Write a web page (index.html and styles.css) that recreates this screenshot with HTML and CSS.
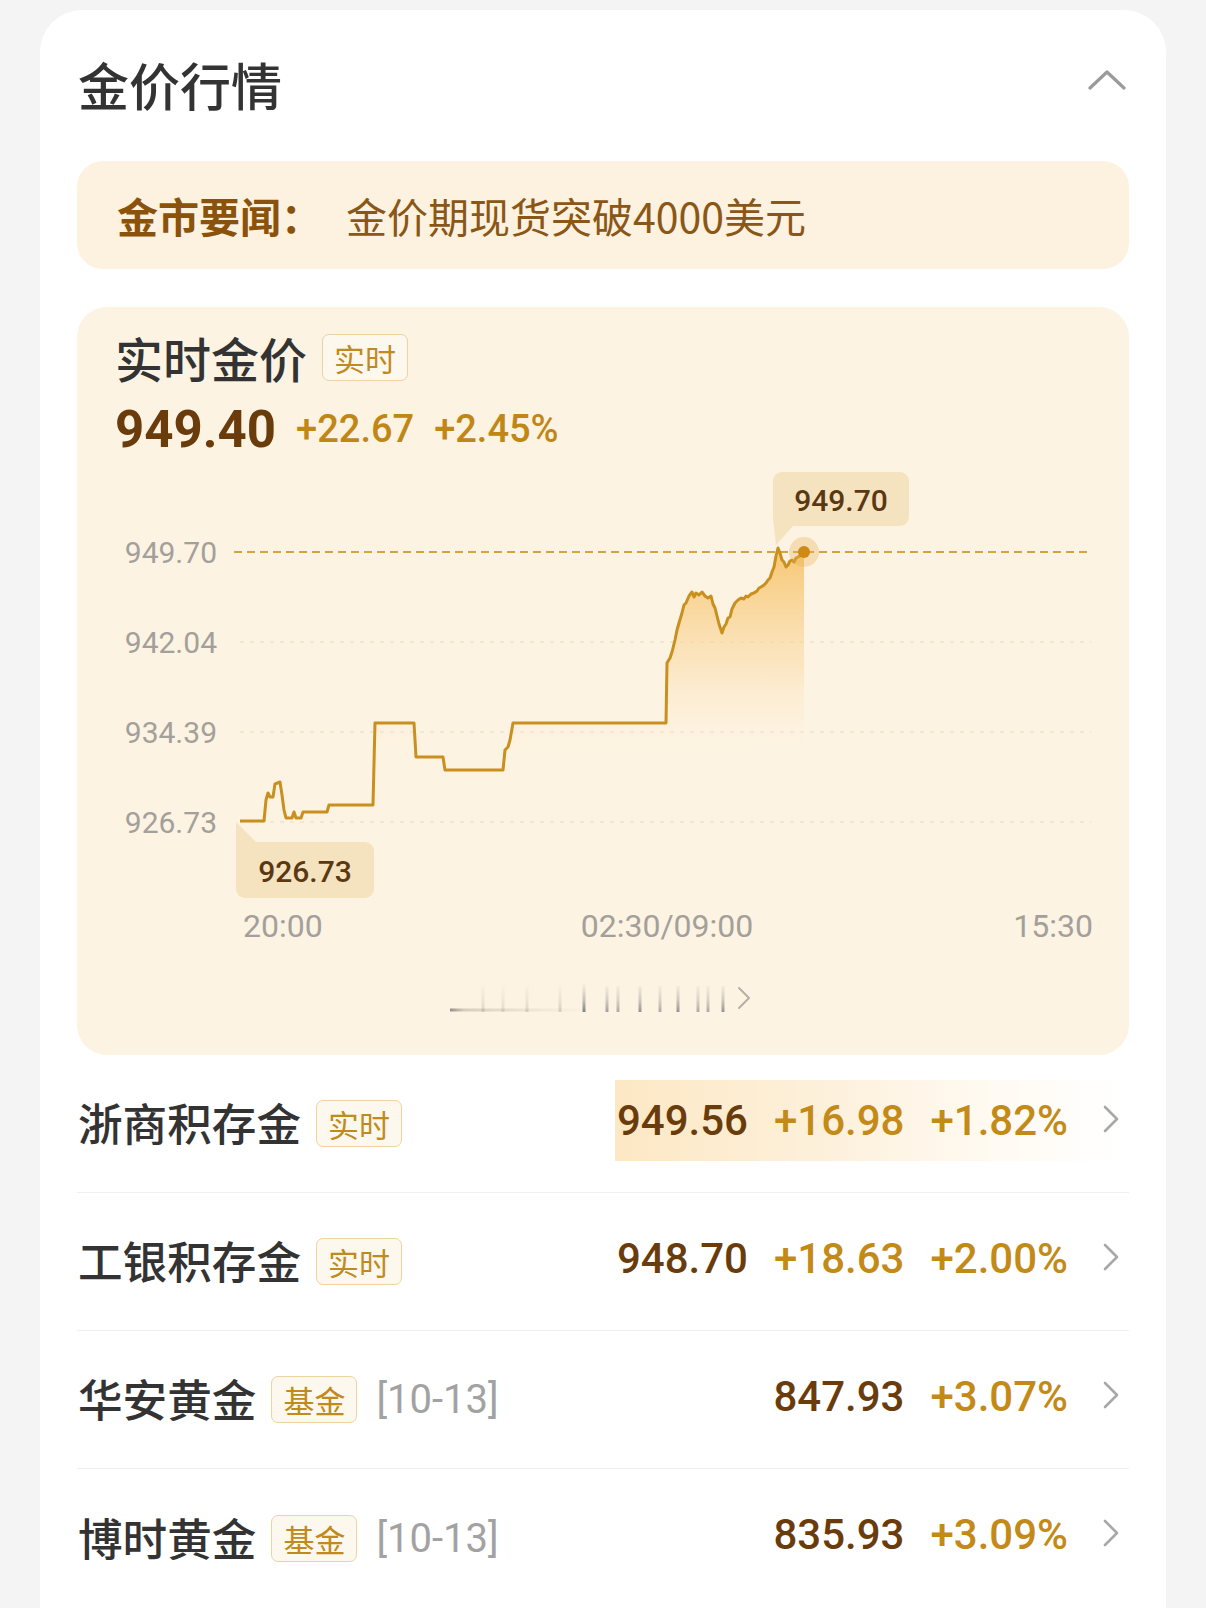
FILE: index.html
```html
<!DOCTYPE html>
<html lang="zh-CN">
<head>
<meta charset="utf-8">
<title>金价行情</title>
<link rel="stylesheet" href="styles.css">
</head>
<body>
<div class="card">
  <div class="header">
    <h1 class="title">金价行情</h1>
    <svg class="collapse" width="38" height="22" viewBox="0 0 38 22"><path d="M2 19 L19 3 L36 19" fill="none" stroke="#9a9a9a" stroke-width="3.2" stroke-linecap="round" stroke-linejoin="round"/></svg>
  </div>

  <div class="news">
    <span class="news-label">金市要闻<span class="colon">：</span></span>
    <span class="news-text">金价期现货突破4000美元</span>
  </div>

  <div class="chart-card">
    <div class="chart-title-row">
      <span class="chart-title">实时金价</span>
      <span class="tag">实时</span>
    </div>
    <div class="price-row">
      <span class="price-main">949.40</span>
      <span class="price-chg">+22.67</span>
      <span class="price-chg">+2.45%</span>
    </div>
    <svg class="chart" width="1052" height="491" viewBox="77 459 1052 491">
      <defs>
        <linearGradient id="area" x1="0" y1="548" x2="0" y2="760" gradientUnits="userSpaceOnUse">
          <stop offset="0" stop-color="#f6bd5c" stop-opacity="0.85"/>
          <stop offset="0.55" stop-color="#f9d598" stop-opacity="0.45"/>
          <stop offset="1" stop-color="#fdf3e2" stop-opacity="0"/>
        </linearGradient>
      </defs>
      <g class="ylabels">
        <text x="217" y="552">949.70</text>
        <text x="217" y="642">942.04</text>
        <text x="217" y="732">934.39</text>
        <text x="217" y="822">926.73</text>
      </g>
      <line x1="240" y1="642" x2="1091" y2="642" class="grid"/>
      <line x1="240" y1="732" x2="1091" y2="732" class="grid"/>
      <line x1="240" y1="822" x2="1091" y2="822" class="grid"/>
      <path class="area" d="M240,821 L264,821 L266,800 L268,793 L270,797 L273,797 L275,784 L280,782 L282,795 L284,810 L286,818 L292,818 L294,812 L296,818 L301,818 L303,812 L327,812 L329,805 L373,805 L375,723 L414,723 L416,757 L443,757 L445,770 L503,770 L505,750 L508,747 L510,740 L513,723 L666,723 L667,663 L670,658 L672,652 L675,640 L677,630 L679,623 L682,613 L684,605 L686,603 L689,596 L692,592 L694,597 L696,593 L699,595 L702,592 L705,596 L708,598 L711,596 L713,604 L715,608 L717,616 L719,624 L722,633 L724,627 L726,624 L728,618 L730,617 L732,609 L735,603 L738,600 L741,598 L744,599 L746,596 L748,597 L751,594 L754,593 L757,591 L759,588 L761,587 L764,585 L766,583 L768,580 L770,578 L772,572 L774,567 L776,556 L778,548 L780,553 L782,560 L784,562 L786,567 L788,565 L790,561 L792,560 L794,562 L796,558 L798,557 L801,555 L804,552 L804,830 L240,830 Z"/>
      <line x1="234" y1="552" x2="1091" y2="552" class="grid-top"/>
      <path class="line" d="M240,821 L264,821 L266,800 L268,793 L270,797 L273,797 L275,784 L280,782 L282,795 L284,810 L286,818 L292,818 L294,812 L296,818 L301,818 L303,812 L327,812 L329,805 L373,805 L375,723 L414,723 L416,757 L443,757 L445,770 L503,770 L505,750 L508,747 L510,740 L513,723 L666,723 L667,663 L670,658 L672,652 L675,640 L677,630 L679,623 L682,613 L684,605 L686,603 L689,596 L692,592 L694,597 L696,593 L699,595 L702,592 L705,596 L708,598 L711,596 L713,604 L715,608 L717,616 L719,624 L722,633 L724,627 L726,624 L728,618 L730,617 L732,609 L735,603 L738,600 L741,598 L744,599 L746,596 L748,597 L751,594 L754,593 L757,591 L759,588 L761,587 L764,585 L766,583 L768,580 L770,578 L772,572 L774,567 L776,556 L778,548 L780,553 L782,560 L784,562 L786,567 L788,565 L790,561 L792,560 L794,562 L796,558 L798,557 L801,555 L804,552"/>
      <circle cx="804" cy="552" r="15" class="halo"/>
      <circle cx="804" cy="552" r="6" class="dot"/>
      <g class="tip">
        <rect x="773" y="472" width="136" height="54" rx="9"/>
        <path d="M773,518 L793,526 L776,545 Z"/>
        <text x="841" y="500">949.70</text>
      </g>
      <g class="tip">
        <rect x="236" y="842" width="138" height="56" rx="9"/>
        <path d="M236,822 L236,850 L256,842 Z"/>
        <text x="305" y="871">926.73</text>
      </g>
      <g class="xlabels">
        <text x="243" y="926" class="start">20:00</text>
        <text x="667" y="926" class="mid">02:30/09:00</text>
        <text x="1093" y="926" class="end">15:30</text>
      </g>
    </svg>
    <svg class="slider" width="310" height="40" viewBox="0 0 310 40">
      <defs>
        <linearGradient id="hline" x1="0" y1="0" x2="140" y2="0" gradientUnits="userSpaceOnUse">
          <stop offset="0" stop-color="#7a7a7a" stop-opacity="0.9"/>
          <stop offset="0.12" stop-color="#a8a090" stop-opacity="0.45"/>
          <stop offset="1" stop-color="#d8cfc0" stop-opacity="0.05"/>
        </linearGradient>
        <linearGradient id="vbar" x1="0" y1="6" x2="0" y2="35" gradientUnits="userSpaceOnUse">
          <stop offset="0" stop-color="#9a9a9a" stop-opacity="0.05"/>
          <stop offset="0.55" stop-color="#8a8a8a" stop-opacity="0.5"/>
          <stop offset="1" stop-color="#6e6e6e" stop-opacity="0.95"/>
        </linearGradient>
      </defs>
      <line x1="2" y1="32" x2="140" y2="32" stroke="url(#hline)" stroke-width="3"/>
      <g stroke="url(#vbar)" stroke-width="3" class="bars">
        <line x1="35" y1="8" x2="35" y2="34" opacity="0.25"/>
        <line x1="55" y1="8" x2="55" y2="34" opacity="0.2"/>
        <line x1="79" y1="8" x2="79" y2="34" opacity="0.25"/>
        <line x1="112" y1="8" x2="112" y2="34" opacity="0.3"/>
        <line x1="136" y1="6" x2="136" y2="34" opacity="0.95"/>
        <line x1="159" y1="8" x2="159" y2="34" opacity="0.7"/>
        <line x1="170" y1="8" x2="170" y2="34" opacity="0.6"/>
        <line x1="192" y1="8" x2="192" y2="34" opacity="0.8"/>
        <line x1="212" y1="8" x2="212" y2="34" opacity="0.6"/>
        <line x1="230" y1="8" x2="230" y2="34" opacity="0.8"/>
        <line x1="250" y1="8" x2="250" y2="34" opacity="0.6"/>
        <line x1="260" y1="8" x2="260" y2="34" opacity="0.6"/>
        <line x1="275" y1="8" x2="275" y2="34" opacity="0.8"/>
      </g>
      <path d="M291 10 L301 20 L291 30" fill="none" stroke="#b5b0a8" stroke-width="2" stroke-linecap="round" stroke-linejoin="round"/>
    </svg>
  </div>

  <div class="list">
    <div class="row">
      <span class="name">浙商积存金</span>
      <span class="tag">实时</span>
      <div class="right flash">
        <span class="val price">949.56</span>
        <span class="val chg">+16.98</span>
        <span class="val chg pct">+1.82%</span>
        <svg class="arrow" width="18" height="28" viewBox="0 0 18 28"><path d="M3 2 L15 14 L3 26" fill="none" stroke="#a8a8a8" stroke-width="2.6" stroke-linecap="round" stroke-linejoin="round"/></svg>
      </div>
    </div>
    <div class="row">
      <span class="name">工银积存金</span>
      <span class="tag">实时</span>
      <div class="right">
        <span class="val price">948.70</span>
        <span class="val chg">+18.63</span>
        <span class="val chg pct">+2.00%</span>
        <svg class="arrow" width="18" height="28" viewBox="0 0 18 28"><path d="M3 2 L15 14 L3 26" fill="none" stroke="#a8a8a8" stroke-width="2.6" stroke-linecap="round" stroke-linejoin="round"/></svg>
      </div>
    </div>
    <div class="row">
      <span class="name">华安黄金</span>
      <span class="tag">基金</span>
      <span class="date">[10-13]</span>
      <div class="right">
        <span class="val price">847.93</span>
        <span class="val chg pct">+3.07%</span>
        <svg class="arrow" width="18" height="28" viewBox="0 0 18 28"><path d="M3 2 L15 14 L3 26" fill="none" stroke="#a8a8a8" stroke-width="2.6" stroke-linecap="round" stroke-linejoin="round"/></svg>
      </div>
    </div>
    <div class="row last">
      <span class="name">博时黄金</span>
      <span class="tag">基金</span>
      <span class="date">[10-13]</span>
      <div class="right">
        <span class="val price">835.93</span>
        <span class="val chg pct">+3.09%</span>
        <svg class="arrow" width="18" height="28" viewBox="0 0 18 28"><path d="M3 2 L15 14 L3 26" fill="none" stroke="#a8a8a8" stroke-width="2.6" stroke-linecap="round" stroke-linejoin="round"/></svg>
      </div>
    </div>
  </div>
</div>
</body>
</html>
```

FILE: styles.css
```css
* { box-sizing: border-box; }

html, body {
  margin: 0;
  padding: 0;
  background: #f4f4f4;
}

body {
  width: 1206px;
  height: 1608px;
  overflow: hidden;
  font-family: "Noto Sans CJK SC", "Noto Sans", sans-serif;
  color: #333;
}

.card {
  margin: 10px 0 0 40px;
  width: 1126px;
  min-height: 1620px;
  background: #ffffff;
  border-radius: 42px 42px 0 0;
  padding: 0 37px;
}

.header {
  height: 148px;
  display: flex;
  align-items: center;
  justify-content: space-between;
  margin-bottom: 3px;
}

.title {
  margin: 0 0 0 1px;
  font-size: 51px;
  font-weight: 500;
  color: #333;
  line-height: 1;
}

.collapse {
  margin-right: 3px;
  margin-bottom: 9px;
}

.news {
  height: 108px;
  border-radius: 26px;
  background: #fdf2df;
  display: flex;
  align-items: center;
  padding-left: 40px;
  font-size: 41px;
  color: #8a5716;
}

.news-label {
  font-weight: 700;
  color: #8a520b;
}

.colon {
  font-family: "Noto Sans CJK TC", "Noto Sans CJK SC", sans-serif;
}

.news-text {
  margin-left: 24px;
  font-weight: 400;
}

.chart-card {
  margin-top: 38px;
  height: 748px;
  border-radius: 30px;
  background: #fdf3e2;
  padding-top: 20px;
  display: flex;
  flex-direction: column;
}

.chart-title-row {
  height: 60px;
  display: flex;
  align-items: center;
  padding-left: 38px;
}

.chart-title {
  font-size: 48px;
  font-weight: 500;
  color: #333;
}

.chart-title-row .tag {
  margin-left: 15px;
}

.price-row {
  margin-top: 12px;
  height: 60px;
  display: flex;
  align-items: center;
  padding-left: 38px;
  font-family: Roboto, "Noto Sans CJK SC", sans-serif;
}

.price-main {
  font-size: 51px;
  font-weight: 700;
  color: #6a3c0b;
}

.price-chg {
  margin-left: 20px;
  font-size: 38px;
  font-weight: 500;
  color: #c08717;
}

.chart {
  display: block;
}

.chart text {
  font-family: Roboto, sans-serif;
  dominant-baseline: central;
}

.ylabels text {
  font-size: 30px;
  fill: #a3a09b;
  text-anchor: end;
}

.xlabels text {
  font-size: 32px;
  fill: #a3a09b;
}

.xlabels .start { text-anchor: start; }
.xlabels .mid { text-anchor: middle; }
.xlabels .end { text-anchor: end; }

.grid {
  stroke: #efe3cb;
  stroke-width: 1.5;
  stroke-dasharray: 4 6;
}

.grid-top {
  stroke: #d3a441;
  stroke-width: 2;
  stroke-dasharray: 8 5;
}

.area {
  fill: url(#area);
}

.line {
  fill: none;
  stroke: #c98f1f;
  stroke-width: 3;
  stroke-linejoin: round;
}

.halo {
  fill: #e4b258;
  opacity: 0.35;
}

.dot {
  fill: #cf8a13;
}

.tip rect, .tip path {
  fill: #f5e3c0;
}

.tip text {
  font-size: 30px;
  font-weight: 500;
  fill: #5a3812;
  text-anchor: middle;
}

.slider {
  display: block;
  margin: 28px auto 0;
  position: relative;
  left: 0;
}

.tag {
  display: inline-flex;
  align-items: center;
  justify-content: center;
  height: 47px;
  padding: 0 11px;
  border: 1.5px solid #ecd3a0;
  border-radius: 7px;
  background: #fdf8ee;
  font-size: 31px;
  line-height: 1;
  color: #c08a1c;
  font-family: "Noto Sans CJK SC", sans-serif;
}

.row {
  height: 138px;
  display: flex;
  align-items: center;
  border-bottom: 1.5px solid #f0f0f0;
  padding-right: 9px;
  padding-left: 1px;
}

.row.last {
  border-bottom: none;
}

.name {
  font-size: 44.6px;
  font-weight: 500;
  color: #333;
  margin-top: -4px;
}

.row .tag {
  margin-left: 15px;
}

.date {
  margin-left: 19px;
  font-family: Roboto, sans-serif;
  font-size: 40px;
  color: #a2a2a2;
}

.right {
  margin-left: auto;
  height: 81px;
  display: flex;
  align-items: center;
  justify-content: flex-end;
  margin-top: -6px;
}

.right.flash {
  width: 505px;
  background: linear-gradient(90deg, #fde8c4 0%, #fdf0da 40%, #fffaf2 75%, rgba(255, 255, 255, 0) 100%);
}

.val {
  font-family: Roboto, sans-serif;
  font-size: 42px;
  font-weight: 500;
  line-height: 1;
}

.val + .val {
  margin-left: 26px;
}

.price {
  color: #6a3c0c;
}

.chg {
  color: #c38a18;
}

.val.pct {
  margin-right: 0;
}

.arrow {
  margin-left: 34px;
  margin-bottom: 4px;
}
```
